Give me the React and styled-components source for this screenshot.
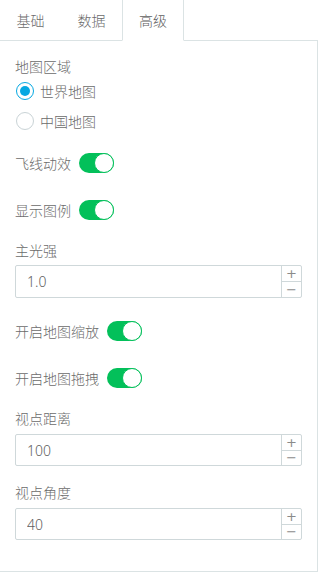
import React, { useState } from "react";
import styled, { createGlobalStyle } from "styled-components";

const Global = createGlobalStyle`
  html, body { margin: 0; padding: 0; background: #fff; }
  body { font-family: "Noto Sans CJK SC", "Noto Sans", sans-serif; }
  * { box-sizing: border-box; }
`;

const BORDER = "#dbe3e4";
const INPUT_BORDER = "#cfd8da";
const TEXT = "#6b6b6b";

const Root = styled.div`
  width: 318px;
  display: flex;
  flex-direction: column;
`;

const TabBar = styled.div`
  display: flex;
  height: 41px;
`;

const Tab = styled.div`
  width: ${(p) => (p.$active ? "62px" : "61px")};
  height: 41px;
  display: flex;
  align-items: center;
  justify-content: center;
  font-size: 14px;
  font-weight: 300;
  color: ${(p) => (p.$active ? "#5e5e5e" : TEXT)};
  border-bottom: 1px solid ${(p) => (p.$active ? "transparent" : BORDER)};
  border-left: ${(p) => (p.$active ? `1px solid ${BORDER}` : "none")};
  border-right: ${(p) => (p.$active ? `1px solid ${BORDER}` : "none")};
  padding-bottom: 1px;
  cursor: pointer;
`;

const TabFill = styled.div`
  flex: 1;
  border-bottom: 1px solid ${BORDER};
`;

const Panel = styled.div`
  border-right: 1px solid ${BORDER};
  border-bottom: 1px solid ${BORDER};
  padding: 15px 15px 31px 15px;
  display: flex;
  flex-direction: column;
`;

const Item = styled.div`
  margin-top: ${(p) => p.$gap || 0}px;
  display: flex;
  flex-direction: column;
`;

const Label = styled.div`
  font-size: 14px;
  font-weight: 300;
  line-height: 20px;
  height: 20px;
  color: ${TEXT};
`;

const RadioRow = styled.label`
  display: flex;
  align-items: center;
  height: 30px;
  gap: 6px;
  font-size: 14px;
  font-weight: 300;
  color: ${TEXT};
  cursor: pointer;
`;

const RadioCircle = styled.span`
  width: 18px;
  height: 18px;
  margin-left: 1px;
  border-radius: 50%;
  border: 1px solid ${(p) => (p.$checked ? "#06a8e2" : "#c9d3d6")};
  display: flex;
  align-items: center;
  justify-content: center;
  background: #fff;
  &::after {
    content: "";
    width: 10px;
    height: 10px;
    border-radius: 50%;
    background: ${(p) => (p.$checked ? "#06a8e2" : "transparent")};
  }
`;

const SwitchRow = styled.div`
  display: flex;
  align-items: center;
  gap: 8px;
  height: 20px;
  font-size: 14px;
  font-weight: 300;
  color: ${TEXT};
`;

const Switch = styled.button`
  width: 35px;
  height: 20px;
  border-radius: 10px;
  border: none;
  padding: 0;
  background: ${(p) => (p.$on ? "#03c05a" : "#d3dcde")};
  display: flex;
  align-items: center;
  justify-content: ${(p) => (p.$on ? "flex-end" : "flex-start")};
  cursor: pointer;
  &::after {
    content: "";
    width: 20px;
    height: 20px;
    border-radius: 50%;
    background: #fff;
    border: 1px solid ${(p) => (p.$on ? "#03c05a" : "#d3dcde")};
    box-sizing: border-box;
  }
`;

const NumberBox = styled.div`
  margin-top: ${(p) => p.$gap}px;
  height: ${(p) => p.$h || 32}px;
  border: 1px solid ${INPUT_BORDER};
  border-radius: 2px;
  display: flex;
`;

const NumberValue = styled.input`
  flex: 1;
  min-width: 0;
  border: none;
  outline: none;
  padding: 0 0 0 11px;
  font-family: "Noto Sans", "Noto Sans CJK SC", sans-serif;
  font-weight: 300;
  font-size: 14px;
  color: #5e5e5e;
  background: transparent;
`;

const Spinner = styled.div`
  width: 20px;
  border-left: 1px solid ${INPUT_BORDER};
  display: flex;
  flex-direction: column;
`;

const SpinBtn = styled.div`
  flex: 1;
  display: flex;
  align-items: center;
  justify-content: center;
  color: #8a8a8a;
  font-family: "DejaVu Sans", sans-serif;
  font-size: 13px;
  line-height: 1;
  border-top: ${(p) => (p.$down ? `1px solid ${INPUT_BORDER}` : "none")};
  cursor: pointer;
`;

function NumberInput({ value, gap, h }) {
  return (
    <NumberBox $gap={gap} $h={h}>
      <NumberValue defaultValue={value} />
      <Spinner>
        <SpinBtn>+</SpinBtn>
        <SpinBtn $down>−</SpinBtn>
      </Spinner>
    </NumberBox>
  );
}

function Toggle({ label, gap }) {
  const [on, setOn] = useState(true);
  return (
    <Item $gap={gap}>
      <SwitchRow>
        {label}
        <Switch $on={on} onClick={() => setOn(!on)} />
      </SwitchRow>
    </Item>
  );
}

export default function App() {
  const [tab, setTab] = useState(2);
  const [map, setMap] = useState("world");
  const tabs = ["基础", "数据", "高级"];
  return (
    <Root>
      <Global />
      <TabBar>
        {tabs.map((t, i) => (
          <Tab key={t} $active={tab === i} onClick={() => setTab(i)}>
            {t}
          </Tab>
        ))}
        <TabFill />
      </TabBar>
      <Panel>
        <Item>
          <Label>地图区域</Label>
          <RadioRow onClick={() => setMap("world")}>
            <RadioCircle $checked={map === "world"} />
            世界地图
          </RadioRow>
          <RadioRow onClick={() => setMap("china")}>
            <RadioCircle $checked={map === "china"} />
            中国地图
          </RadioRow>
        </Item>
        <Toggle label="飞线动效" gap={17} />
        <Toggle label="显示图例" gap={27} />
        <Item $gap={20}>
          <Label>主光强</Label>
          <NumberInput value="1.0" gap={5} h={33} />
        </Item>
        <Toggle label="开启地图缩放" gap={23} />
        <Toggle label="开启地图拖拽" gap={27} />
        <Item $gap={20}>
          <Label>视点距离</Label>
          <NumberInput value="100" gap={6} />
        </Item>
        <Item $gap={16}>
          <Label>视点角度</Label>
          <NumberInput value="40" gap={6} />
        </Item>
      </Panel>
    </Root>
  );
}
